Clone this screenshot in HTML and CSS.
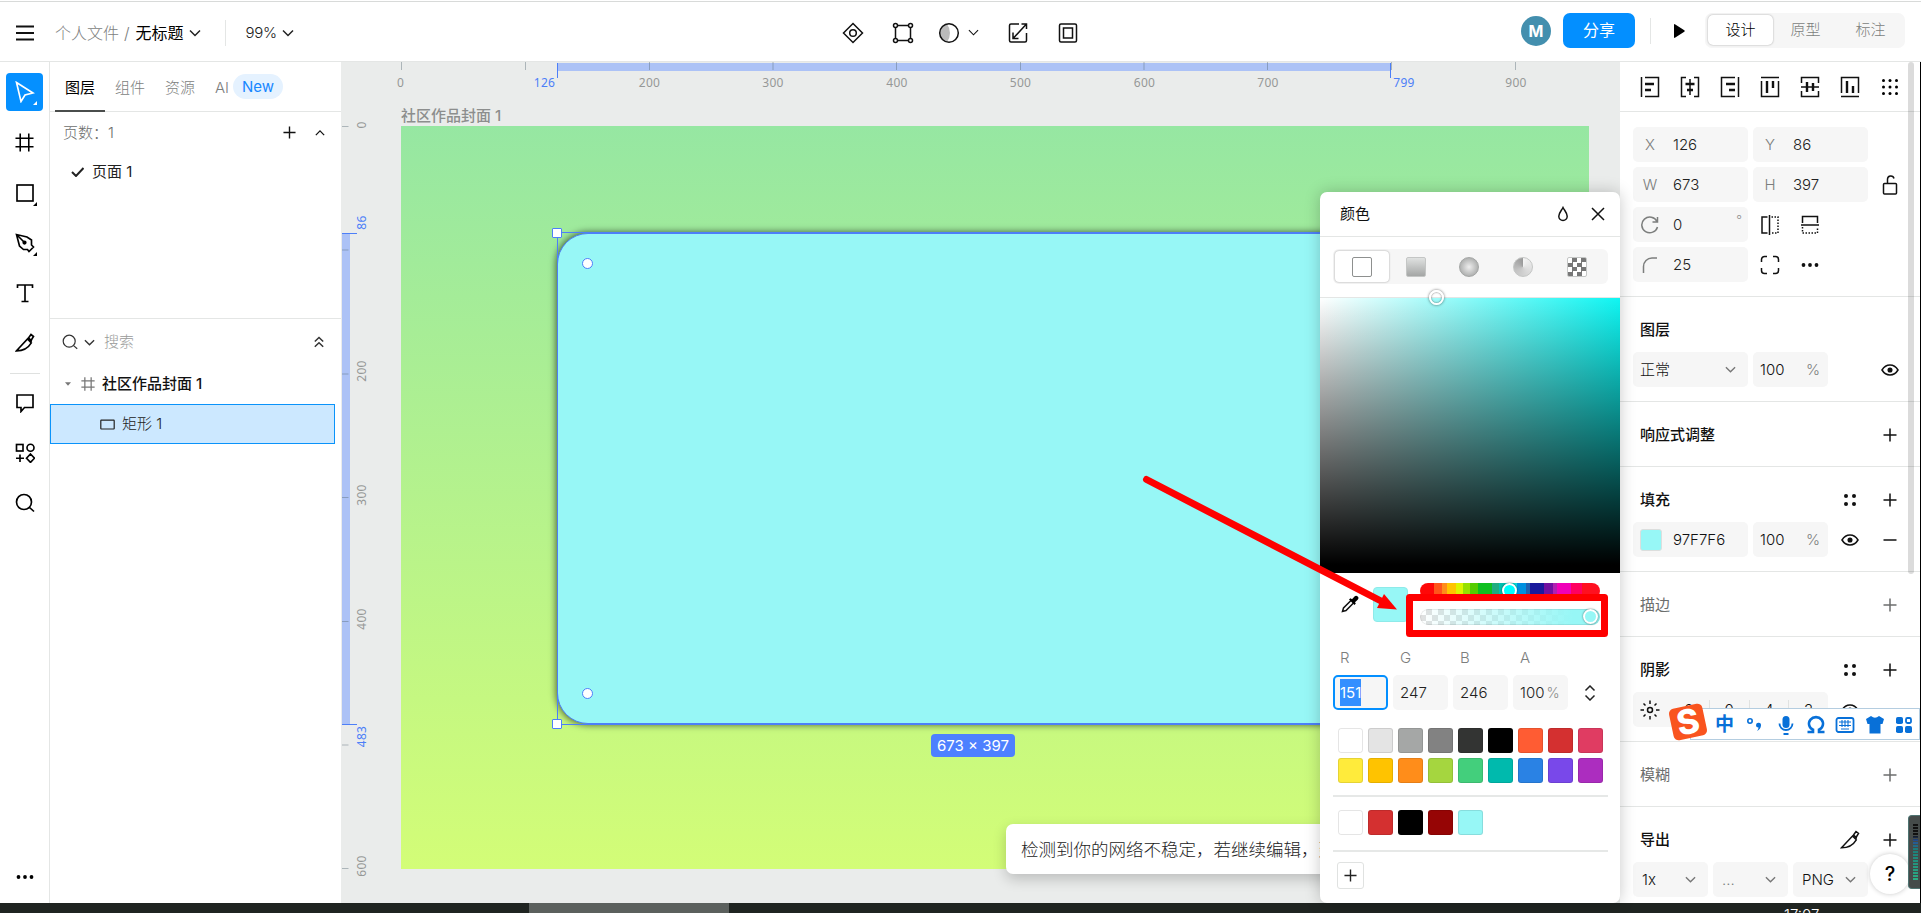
FILE: index.html
```html
<!DOCTYPE html>
<html lang="zh-CN">
<head>
    <meta charset="UTF-8">
    <meta name="viewport" content="width=device-width, initial-scale=1.0">
    <title>无标题</title>
    <link rel="stylesheet" href="styles.css">
</head>
<body>

<!-- Shared icons -->
<svg class="sprite">
    <symbol id="chevron" viewBox="0 0 12 12"><path d="M1 3.5l5 5 5-5"/></symbol>
    <symbol id="plus" viewBox="0 0 14 14"><path d="M7 .5v13M.5 7h13"/></symbol>
    <symbol id="minus" viewBox="0 0 14 14"><path d="M.5 7h13"/></symbol>
    <symbol id="eye" viewBox="0 0 18 12"><path d="M1 6c2-3.300 5-5 8-5s6 1.700 8 5c-2 3.300-5 5-8 5s-6-1.700-8-5z"/><circle cx="9" cy="6" r="1.800" fill="currentColor"/></symbol>
    <symbol id="dots4" viewBox="0 0 14 14"><g fill="currentColor" stroke="none"><circle cx="3" cy="3" r="2"/><circle cx="11" cy="3" r="2"/><circle cx="3" cy="11" r="2"/><circle cx="11" cy="11" r="2"/></g></symbol>
    <symbol id="dots3" viewBox="0 0 18 6"><g fill="currentColor" stroke="none"><circle cx="2.500" cy="3" r="1.900"/><circle cx="9" cy="3" r="1.900"/><circle cx="15.500" cy="3" r="1.900"/></g></symbol>
    <symbol id="knife" viewBox="0 0 20 20"><path d="M1.500 17.800L12.500 6l3.800 3.800c-3 5-8 8-14.800 8zM13.500 5l2.500-3.500 2.500 2-2.500 4M12.500 6l1-1 2.800 2.600-.5 2"/></symbol>
    <symbol id="search" viewBox="0 0 20 20"><circle cx="9" cy="9" r="7.500"/><path d="M14.500 14.500L19 18.500"/></symbol>
    <symbol id="frame" viewBox="0 0 20 20"><path d="M5.500 .5v19M14.500 .5v19M.5 5.500h19M.5 14.500h19"/></symbol>
</svg>

<header class="topbar">
    <div class="top-left">
        <svg class="icon menu" width="18" height="16" viewBox="0 0 18 16"><path d="M0 1.500h18M0 8h18M0 14.500h18"/></svg>
        <span class="folder">个人文件</span><span class="slash">/</span><span class="doc">无标题</span>
        <svg class="icon" width="12" height="12"><use href="#chevron"/></svg>
        <span class="vline"></span>
        <span class="zoom">99%</span>
        <svg class="icon" width="12" height="12"><use href="#chevron"/></svg>
    </div>

    <div class="top-tools">
        <svg class="icon t-diamond" width="22" height="22" viewBox="0 0 22 22"><path d="M11 1.500l9.500 9.500-9.500 9.500L1.500 11z"/><circle cx="11" cy="11" r="3.300"/></svg>
        <svg class="icon t-box" width="22" height="22" viewBox="0 0 22 22"><path d="M5 3.500h12M5 18.500h12M3.500 5v12M18.500 5v12"/><circle cx="3.500" cy="3.500" r="2"/><circle cx="18.500" cy="3.500" r="2"/><circle cx="3.500" cy="18.500" r="2"/><circle cx="18.500" cy="18.500" r="2"/></svg>
        <svg class="icon t-bool" width="22" height="22" viewBox="0 0 22 22"><path d="M9 2a9.300 9.300 0 0 0 0 18q3-4 3-9t-3-9z" fill="#bbb" stroke="none"/><circle cx="11" cy="11" r="9.300"/></svg>
        <svg class="icon t-chev" width="11" height="11"><use href="#chevron"/></svg>
        <svg class="icon t-export" width="20" height="22" viewBox="0 0 20 22"><path d="M11 2H3a1.500 1.500 0 0 0-1.500 1.500v15A1.500 1.500 0 0 0 3 20h14a1.500 1.500 0 0 0 1.500-1.500V11M13.500 2h5v5M18 2.500L5.500 16M5 10.500V16.500h5.500"/></svg>
        <svg class="icon" width="20" height="22" viewBox="0 0 20 22"><rect x="1.500" y="2" width="17" height="18" rx="1.500"/><rect x="5.500" y="6" width="9" height="10"/></svg>
    </div>

    <div class="top-right">
        <span class="avatar">M</span>
        <span class="share">分享</span>
        <span class="vline"></span>
        <svg class="play" width="13" height="16" viewBox="0 0 13 16"><path d="M1 2v12q0 1.500 1.300.6l9-5.800q1-.8 0-1.600l-9-5.800Q1 .5 1 2z"/></svg>
        <div class="modes"><span class="on">设计</span><span>原型</span><span>标注</span></div>
    </div>
</header>

<div class="workspace">
    <nav class="toolbar">
        <span class="tool active"><svg class="icon" width="20" height="22" viewBox="0 0 20 22"><path d="M1.500 1.500l16.500 10.500-8 2-4 6.500z"/></svg><i></i></span>
        <span class="tool"><svg class="icon" width="19" height="19"><use href="#frame"/></svg></span>
        <span class="tool"><svg class="icon" width="18" height="18" viewBox="0 0 18 18"><rect x="1" y="1" width="16" height="16"/></svg><i></i></span>
        <span class="tool"><svg class="icon" width="20" height="20" viewBox="0 0 20 20"><path d="M1.500 1.500L4.500 13l4 3.500h4l1.500 2 4.500-4.500-2-2V7L12 4zM1.500 1.500l7 7"/><circle cx="9.500" cy="9.500" r="1.300" fill="currentColor"/></svg><i></i></span>
        <span class="tool"><svg class="icon" width="18" height="20" viewBox="0 0 18 20"><path d="M1.500 5V2h15v3M9 2v16M5.500 18.500h7"/></svg></span>
        <span class="tool"><svg class="icon" width="20" height="20"><use href="#knife"/></svg></span>
        <hr>
        <span class="tool"><svg class="icon" width="20" height="20" viewBox="0 0 20 20"><path d="M2 2h16v12.500H9.500L6 18.500v-4H2z"/></svg></span>
        <span class="tool"><svg class="icon" width="20" height="20" viewBox="0 0 20 20"><rect x="1.500" y="1.500" width="6.500" height="6.500"/><circle cx="15.500" cy="4.700" r="3.500"/><path d="M5 11.500v7.500M1 15.200h8M15.500 11l4 4.200-4 4.200-4-4.200z"/></svg></span>
        <span class="tool"><svg class="icon" width="20" height="20"><use href="#search"/></svg></span>
        <svg class="more" width="18" height="6"><use href="#dots3"/></svg>
    </nav>

    <aside class="layers">
        <div class="tabs">
            <span class="on">图层</span><span>组件</span><span>资源</span><span class="ai">AI</span><b>New</b>
        </div>
        <div class="pages">
            <div class="pages-head">
                <span>页数：1</span>
                <svg class="icon" width="13" height="13"><use href="#plus"/></svg>
                <svg class="icon up" width="10" height="10"><use href="#chevron"/></svg>
            </div>
            <div class="page-row">
                <svg class="icon bold" width="13" height="10" viewBox="0 0 13 10"><path d="M1 5l4 4 7.500-8"/></svg>
                <span>页面 1</span>
            </div>
        </div>
        <div class="search-row">
            <svg class="icon glass" width="16" height="16"><use href="#search"/></svg>
            <svg class="icon" width="11" height="11"><use href="#chevron"/></svg>
            <span>搜索</span>
            <svg class="icon collapse" width="10" height="12" viewBox="0 0 10 12"><path d="M.8 5.500L5 1.500l4.200 4M.8 10.800L5 6.800l4.200 4"/></svg>
        </div>
        <div class="layer-frame">
            <svg width="6" height="4" viewBox="0 0 6 4"><path d="M0 .3h6L3 3.700z"/></svg>
            <svg class="icon" width="14" height="14"><use href="#frame"/></svg>
            <span>社区作品封面 1</span>
        </div>
        <div class="layer-item">
            <svg class="icon" width="15" height="11" viewBox="0 0 15 11"><rect x=".8" y="1.200" width="13.400" height="8.800" rx=".5"/></svg>
            <span>矩形 1</span>
        </div>
    </aside>

    <main class="canvas">
        <!-- Rulers -->
        <svg class="rulers" width="1279" height="841" viewBox="341 62 1279 841">
            <g class="range"><rect x="557" y="63" width="834" height="8"/><rect x="342" y="233" width="8" height="491"/></g>
            <path class="ticks" d="M401.500 62v8M525.500 62v8M649.500 62v8M773 62v8M896.500 62v8M1020.500 62v8M1144 62v8M1267.500 62v8M1391.500 62v8M1515.500 62v8M342 126.500h6.500M342 250h6.500M342 374h6.500M342 497.500h6.500M342 621.500h6.500M342 745h6.500M342 868.500h6.500"/>
            <path class="edge" d="M557.500 63v15M1390.500 63v15M342 233.500h15M342 724.500h15"/>
            <g class="num">
                <text x="400.500" y="87">0</text><text x="649.500" y="87">200</text><text x="773" y="87">300</text><text x="897" y="87">400</text><text x="1020.500" y="87">500</text><text x="1144.500" y="87">600</text><text x="1268" y="87">700</text><text x="1516" y="87">900</text>
                <text class="sel" x="544.500" y="87">126</text><text class="sel" x="1404" y="87">799</text>
                <text transform="translate(366 125) rotate(-90)">0</text>
                <text transform="translate(366 371) rotate(-90)">200</text>
                <text transform="translate(366 495) rotate(-90)">300</text>
                <text transform="translate(366 619) rotate(-90)">400</text>
                <text transform="translate(366 866) rotate(-90)">600</text>
                <text class="sel" transform="translate(366 222.500) rotate(-90)">86</text>
                <text class="sel" transform="translate(366 736.500) rotate(-90)">483</text>
            </g>
        </svg>
        <span class="board-name">社区作品封面 1</span>
        <div class="board"></div>
        <div class="shape"></div>
        <div class="selection"></div>
        <i class="handle h-tl"></i>
        <i class="handle h-bl"></i>
        <i class="radius r-tl"></i>
        <i class="radius r-bl"></i>
        <span class="size">673 × 397</span>
        <div class="toast">检测到你的网络不稳定，若继续编辑，建议</div>
    </main>

    <aside class="props">
        <div class="align">
            <svg class="icon" width="20" height="22" viewBox="0 0 20 22"><path d="M1.500 1v20M5 1.500h13.500v19H5"/><path class="fat" d="M5 8h9M5 14h6"/></svg>
            <svg class="icon" width="20" height="22" viewBox="0 0 20 22"><path d="M6 1.500H1.500v19H6M14 1.500h4.500v19H14M10 3v16"/><path class="fat" d="M5.500 8h9M7 14h6"/></svg>
            <svg class="icon" width="20" height="22" viewBox="0 0 20 22"><path d="M18.500 1v20M15 1.500H1.500v19H15"/><path class="fat" d="M6 8h9M9 14h6"/></svg>
            <svg class="icon" width="20" height="22" viewBox="0 0 20 22"><path d="M1 1.500h18M1.500 5v15.500h17V5"/><path class="fat" d="M7 5v12M13 5v7"/></svg>
            <svg class="icon" width="20" height="22" viewBox="0 0 20 22"><path d="M1.500 7V1.500h17V7M1.500 15v5.500h17V15M1 11h18"/><path class="fat" d="M7 6v10M13 7v8"/></svg>
            <svg class="icon" width="20" height="22" viewBox="0 0 20 22"><path d="M1 20.500h18M1.500 17V1.500h17V17"/><path class="fat" d="M7 5v12M13 10v7"/></svg>
            <svg width="18" height="18" viewBox="0 0 18 18"><g id="dotrow"><circle cx="2.500" cy="2.500" r="1.500"/><circle cx="9" cy="2.500" r="1.500"/><circle cx="15.500" cy="2.500" r="1.500"/></g><use href="#dotrow" y="6.500"/><use href="#dotrow" y="13"/></svg>
        </div>

        <div class="geometry">
            <span class="field"><em>X</em>126</span><span class="field"><em>Y</em>86</span><span></span>
            <span class="field"><em>W</em>673</span><span class="field"><em>H</em>397</span>
            <span class="cell"><svg class="icon" width="16" height="22" viewBox="0 0 16 22"><rect x="1.500" y="9.500" width="13" height="10.500" rx="1"/><path d="M5.500 9.500V5a3.300 3.300 0 0 1 6.500-.5"/></svg></span>
            <span class="field"><em><svg class="icon" width="18" height="18" viewBox="0 0 18 18"><path d="M16 5.500A8 7.800 0 1 0 16.500 11M16.500 1v5h-5"/></svg></em>0<sup>°</sup></span>
            <span class="cell pair">
                <svg class="icon" width="20" height="20" viewBox="0 0 20 20"><path d="M9.500 0v20M7.500 2H2v16h5.500"/><path stroke-dasharray="1.500 1.500" d="M11.500 2H18v16h-6.500"/></svg>
                <svg class="icon" width="20" height="20" viewBox="0 0 20 20"><path d="M1 10h18M2.500 8V1.500h15V8"/><path stroke-dasharray="1.500 1.500" d="M2.500 12v6h15v-6"/></svg>
            </span><span></span>
            <span class="field"><em><svg class="icon" width="16" height="18" viewBox="0 0 16 18"><path d="M1.500 17v-6.500A8.500 8.500 0 0 1 10 2h5"/></svg></em>25</span>
            <span class="cell pair">
                <svg class="icon" width="20" height="20" viewBox="0 0 20 20"><path d="M1.500 7V4.500a3 3 0 0 1 3-3H7M13 1.500h2.500a3 3 0 0 1 3 3V7M18.500 13v2.500a3 3 0 0 1-3 3H13M7 18.500H4.500a3 3 0 0 1-3-3V13"/></svg>
                <svg width="20" height="6"><use href="#dots3"/></svg>
            </span><span></span>
        </div>

        <section>
            <div class="title"><h3>图层</h3></div>
            <div class="row">
                <span class="field wide">正常<svg class="icon" width="11" height="11"><use href="#chevron"/></svg></span>
                <span class="field pct">100<em>%</em></span>
                <svg class="icon eye-last" width="18" height="12"><use href="#eye"/></svg>
            </div>
        </section>
        <section>
            <div class="title"><h3>响应式调整</h3><svg class="icon" width="14" height="14"><use href="#plus"/></svg></div>
        </section>
        <section>
            <div class="title"><h3>填充</h3><svg class="icon" width="14" height="14"><use href="#dots4"/></svg><svg class="icon" width="14" height="14"><use href="#plus"/></svg></div>
            <div class="row">
                <span class="field wide fill"><i></i>97F7F6</span>
                <span class="field pct">100<em>%</em></span>
                <svg class="icon near" width="18" height="12"><use href="#eye"/></svg>
                <svg class="icon last" width="14" height="14"><use href="#minus"/></svg>
            </div>
        </section>
        <section>
            <div class="title off"><h3>描边</h3><svg class="icon" width="14" height="14"><use href="#plus"/></svg></div>
        </section>
        <section>
            <div class="title"><h3>阴影</h3><svg class="icon" width="14" height="14"><use href="#dots4"/></svg><svg class="icon" width="14" height="14"><use href="#plus"/></svg></div>
            <div class="row">
                <span class="field shadow">
                    <svg class="icon" width="20" height="20" viewBox="0 0 20 20"><circle cx="10" cy="10" r="2.500"/><path d="M10 .5V4M10 16v3.500M.5 10H4M16 10h3.500M3.500 3.500l2 2M14.500 14.500l2 2M3.500 16.500l2-2M14.500 5.500l2-2"/></svg>
                    <b>0</b><b>0</b><b>4</b><b>2</b>
                </span>
                <svg class="icon near" width="18" height="12"><use href="#eye"/></svg>
            </div>
        </section>
        <section>
            <div class="title off"><h3>模糊</h3><svg class="icon" width="14" height="14"><use href="#plus"/></svg></div>
        </section>
        <section>
            <div class="title"><h3>导出</h3><svg class="icon cut" width="20" height="20"><use href="#knife"/></svg><svg class="icon" width="14" height="14"><use href="#plus"/></svg></div>
            <div class="row export">
                <span class="field">1x<svg class="icon" width="11" height="11"><use href="#chevron"/></svg></span>
                <span class="field"><em>...</em><svg class="icon" width="11" height="11"><use href="#chevron"/></svg></span>
                <span class="field">PNG<svg class="icon" width="11" height="11"><use href="#chevron"/></svg></span>
            </div>
        </section>
    </aside>
</div>

<footer class="taskbar"><span class="task"></span><span class="clock">17:07</span></footer>

<!-- Color picker popup -->
<div class="picker">
    <div class="picker-head">
        <span>颜色</span>
        <svg class="icon" width="12" height="16" viewBox="0 0 12 16"><path d="M6 1.500C4.500 4.500 1.800 7 1.800 10.300a4.200 4.200 0 0 0 8.400 0C10.200 7 7.500 4.500 6 1.500z"/></svg>
        <svg class="icon" width="14" height="14" viewBox="0 0 14 14"><path d="M1 1l12 12M13 1L1 13"/></svg>
    </div>
    <div class="kinds">
        <span class="on"><i class="solid"></i></span><span><i class="linear"></i></span><span><i class="radial"></i></span><span><i class="conic"></i></span><span><i class="image"></i></span>
    </div>
    <div class="spectrum"><i></i></div>
    <div class="sliders">
        <svg class="dropper" width="18" height="18" viewBox="0 0 18 18"><path d="M10 5.500L2.500 13l-1 3.500 3.500-1L12.500 8" fill="none" stroke="#111" stroke-width="1.500"/><path d="M8 4.500l1.500-1.300 1.500 1L13.500 1.500a2.200 2.200 0 0 1 3.200 3.200L14 7.200l.8 1.300L13.500 10z"/></svg>
        <span class="current"></span>
        <div class="bars">
            <div class="hue"><i></i></div>
            <div class="alpha"><i></i></div>
        </div>
    </div>
    <div class="rgba names"><span>R</span><span>G</span><span>B</span><span>A</span></div>
    <div class="rgba values">
        <span class="focus"><mark>151</mark></span><span>247</span><span>246</span><span>100<em>%</em></span>
        <svg class="icon" width="12" height="16" viewBox="0 0 12 16"><path d="M1.500 5.500L6 1l4.500 4.500M1.500 10.500L6 15l4.500-4.500"/></svg>
    </div>
    <div class="swatches palette">
        <i></i><i></i><i></i><i></i><i></i><i></i><i></i><i></i><i></i>
        <i></i><i></i><i></i><i></i><i></i><i></i><i></i><i></i><i></i>
    </div>
    <div class="swatches recent"><i></i><i></i><i></i><i></i><i></i></div>
    <div class="add"><span><svg class="icon" width="13" height="13"><use href="#plus"/></svg></span></div>
</div>

<!-- Red arrow and box pointing at the opacity slider -->
<svg class="note" width="480" height="180" viewBox="1130 465 480 180">
    <path d="M1146.500 479.500L1381 601" stroke="#fe0000" stroke-width="7" stroke-linecap="round"/>
    <path d="M1397 609.500l-20-1.500 7-14z" fill="#fe0000"/>
    <rect x="1409.500" y="597.500" width="195" height="36" fill="none" stroke="#fe0000" stroke-width="7" stroke-linejoin="round"/>
</svg>

<i class="scrollbar"></i>
<span class="help">?</span>
<div class="meter"><i></i></div>

<!-- Input method bar -->
<div class="ime">
    <span>中</span>
    <svg width="22" height="22" viewBox="0 0 22 22"><circle cx="6" cy="7" r="2.200" fill="none" stroke="#0870d8" stroke-width="1.600"/><path d="M12 11a2.500 2.500 0 1 1 5 .5q-.3 3.500-4 5.500 1.500-2 1.500-3.500a2.500 2.500 0 0 1-2.500-2.500z"/></svg>
    <svg width="20" height="22" viewBox="0 0 20 22"><rect x="6.500" y="2" width="7" height="12" rx="3.500"/><path d="M3.500 9.500a6.500 6.500 0 0 0 13 0M7.500 20h5" fill="none" stroke="#0870d8" stroke-width="1.800"/></svg>
    <svg width="20" height="20" viewBox="0 0 20 20"><path d="M1.500 17H7v-2.300A7 6.600 0 1 1 13 14.700V17h5.500" fill="none" stroke="#0870d8" stroke-width="2.600"/></svg>
    <svg width="20" height="18" viewBox="0 0 20 18"><rect x="1.500" y="2" width="17" height="14" rx="2" fill="none" stroke="#0870d8" stroke-width="1.800"/><path d="M4 6h12M4 9.500h12M6 13h8M7 4v7M10 4v7M13 4v7" stroke="#0870d8" stroke-width="1.100"/></svg>
    <svg width="20" height="20" viewBox="0 0 20 20"><path d="M1 4l5-3q4 3.500 8 0l5 3-1.500 5H15.500v9.500h-11V9H2.500z"/></svg>
    <svg width="18" height="18" viewBox="0 0 18 18"><rect x="1" y="1" width="7" height="7" rx="1.800"/><rect x="1" y="10" width="7" height="7" rx="1.800"/><rect x="10" y="10" width="7" height="7" rx="1.800"/><rect x="11" y="2" width="5" height="5" rx="1.500" fill="none" stroke="#0870d8" stroke-width="1.800"/></svg>
</div>
<span class="sogou">S</span>

</body>
</html>
```

FILE: styles.css
```css
* {
    box-sizing: border-box;
}

body {
    margin: 0;
    width: 1921px;
    height: 913px;
    overflow: hidden;
    position: relative;
    display: flex;
    flex-direction: column;
    background: white;
    color: #222;
    font-family: Inter, "Noto Sans CJK SC", sans-serif;
    font-size: 15px;
    font-weight: 300;
    line-height: 20px;
}

i, em {
    font-style: normal;
}

svg {
    flex: none;
    display: block;
}

.sprite {
    position: absolute;
    width: 0;
    height: 0;
}

.icon {
    fill: none;
    stroke: currentColor;
    stroke-width: 1.5;
}

.icon.bold {
    stroke-width: 2;
}

/* Top bar */
.topbar {
    height: 62px;
    display: grid;
    grid-template-columns: 842px 1fr auto;
    border-top: 1px solid #fff;
    border-bottom: 1px solid #e4e6e5;
    box-shadow: inset 0 1px #d8dad9;
}

.top-left {
    display: flex;
    align-items: center;
    padding: 3px 0 0 16px;
    font-size: 16px;
}

.menu {
    margin-right: 21px;
    stroke-width: 1.800;
    color: #111;
}

.folder, .slash {
    color: #7c7e7d;
}

.slash {
    margin: 0 6px 0 5px;
}

.doc {
    color: #000;
    font-weight: 400;
    margin-right: 5px;
}

.vline {
    width: 1px;
    height: 26px;
    background: #e4e6e5;
}

.top-left .vline {
    margin: 0 20px 0 24px;
}

.zoom {
    font-size: 15px;
    margin-right: 5px;
    letter-spacing: -.3px;
}

.top-tools {
    display: flex;
    align-items: center;
    padding-top: 3px;
    color: #111;
}

.t-diamond {
    margin-right: 28px;
}

.t-box {
    margin-right: 24px;
}

.t-bool {
    margin-right: 8px;
}

.t-chev {
    margin-right: 29px;
    stroke-width: 1.200;
}

.t-export {
    margin-right: 30px;
}

.top-right {
    display: flex;
    align-items: center;
    padding: 0 16px 1px 0;
}

.avatar {
    width: 30px;
    height: 30px;
    border-radius: 50%;
    background: #438fae;
    color: white;
    font-weight: 700;
    font-size: 16px;
    line-height: 30px;
    text-align: center;
    margin-right: 12px;
}

.share {
    width: 72px;
    height: 35px;
    border-radius: 7px;
    background: #038fff;
    color: white;
    font-size: 16px;
    font-weight: 400;
    line-height: 34px;
    text-align: center;
    margin-right: 15px;
}

.play {
    margin: 0 19px 0 22px;
}

.modes {
    display: flex;
    width: 200px;
    height: 35px;
    padding: 2px 2px 3px 3px;
    border-radius: 7px;
    background: #f6f6f6;
}

.modes span {
    width: 65px;
    line-height: 30px;
    text-align: center;
    color: #7c7e7d;
}

.modes .on {
    background: white;
    color: #000;
    border-radius: 5px;
    box-shadow: 0 0 2px rgba(0, 0, 0, .35);
    height: 30px;
}

/* Columns */
.workspace {
    display: flex;
    height: 841px;
}

.toolbar {
    width: 50px;
    border-right: 1px solid #e4e6e5;
    display: flex;
    flex-direction: column;
    align-items: center;
    padding-top: 5px;
    color: #000;
}

.tool {
    width: 37px;
    height: 38px;
    margin: 6px 0 6.300px;
    display: flex;
    align-items: center;
    justify-content: center;
    position: relative;
    border-radius: 4px;
}

.tool .icon {
    stroke-width: 1.650;
}

.tool.active {
    background: #0590ff;
    color: white;
}

.tool i {
    position: absolute;
    right: 6px;
    bottom: 6px;
    border: 2.500px solid currentColor;
    border-top-color: transparent;
    border-left-color: transparent;
}

.toolbar hr {
    width: 30px;
    height: 1px;
    border: 0;
    margin: 4px 0;
    background: #dfe1e0;
}

.more {
    margin: auto 0 23px;
}

.layers {
    width: 291px;
    background: white;
}

.tabs {
    display: flex;
    align-items: center;
    height: 50px;
    padding-left: 5px;
    border-bottom: 1px solid #e4e6e5;
    color: #7c7e7d;
}

.tabs span {
    width: 50px;
    height: 50px;
    line-height: 51px;
    text-align: center;
}

.tabs .on {
    color: #000;
    font-weight: 400;
    border-bottom: 2px solid #4a4d4c;
}

.tabs .ai {
    width: auto;
    margin: 0 4px 0 10px;
}

.tabs b {
    padding: 0 9px;
    border-radius: 13px;
    background: #e5f2ff;
    color: #1787ff;
    font-weight: 400;
    line-height: 25px;
}

.pages {
    height: 207px;
    border-bottom: 1px solid #e4e6e5;
}

.pages-head {
    display: flex;
    align-items: center;
    height: 41px;
    padding: 0 16px 0 13px;
    color: #6c6e6d;
}

.pages-head .icon {
    margin-left: auto;
    color: #111;
}

.pages-head .icon.up {
    margin-left: 19px;
    transform: rotate(180deg);
}

.page-row {
    display: flex;
    align-items: center;
    height: 38px;
    padding-left: 21px;
    gap: 8px;
    font-weight: 400;
}

.search-row {
    display: flex;
    align-items: center;
    height: 46px;
    padding: 0 17px 0 12px;
    color: #333;
}

.glass {
    margin-right: 6px;
}

.search-row span {
    margin-left: 9px;
    color: #989a99;
}

.collapse {
    margin-left: auto;
}

.layer-frame {
    display: flex;
    align-items: center;
    height: 39px;
    padding: 0 0 1px 15px;
    color: #111;
    font-weight: 500;
}

.layer-frame svg {
    fill: #777;
    margin-right: 10px;
}

.layer-frame .icon {
    fill: none;
    color: #777;
    margin-right: 7px;
    stroke-width: 1.800;
}

.layer-item {
    display: flex;
    align-items: center;
    gap: 7px;
    width: 285px;
    height: 40px;
    padding-left: 49px;
    border: 1px solid #0a93fa;
    background: #cce8ff;
}

.layer-item .icon {
    stroke-width: 1.200;
}

/* Canvas */
.canvas {
    width: 1279px;
    position: relative;
    overflow: hidden;
    background: #eaeceb;
}

.canvas > * {
    position: absolute;
}

.rulers {
    left: 0;
    top: 0;
    font-family: "Noto Sans", sans-serif;
    font-size: 12px;
}

.range {
    fill: #acc2f6;
}

.ticks {
    stroke: rgba(80, 100, 110, .4);
}

.edge {
    stroke: #4d7ff8;
}

.num {
    fill: #969897;
    text-anchor: middle;
    font-weight: 400;
    letter-spacing: .3px;
}

.num .sel {
    fill: #4d7ff8;
}

.board-name {
    left: 60px;
    top: 44px;
    color: #8c8e8d;
    font-weight: 500;
}

.board {
    left: 60px;
    top: 64px;
    width: 1188px;
    height: 743px;
    background: linear-gradient(#96e7a2, #d3fd77);
}

.shape {
    left: 216px;
    top: 171px;
    width: 834px;
    height: 491px;
    border-radius: 31px;
    border: 1px solid #4d7ff8;
    background: #97f7f6;
    box-shadow: 0 0 7px 1px rgba(0, 0, 0, .6);
}

.selection {
    left: 216px;
    top: 170px;
    width: 834px;
    height: 493px;
    border: 1px solid #4d7ff8;
}

.handle {
    left: 211px;
    width: 10px;
    height: 10px;
    background: white;
    border: 1px solid #4d7ff8;
    border-radius: 1px;
}

.h-tl {
    top: 166px;
}

.h-bl {
    top: 657px;
}

.radius {
    left: 241px;
    width: 11px;
    height: 11px;
    background: white;
    border: 1px solid #4d7ff8;
    border-radius: 50%;
}

.r-tl {
    top: 196px;
}

.r-bl {
    top: 626px;
}

.size {
    left: 590px;
    top: 672px;
    width: 84px;
    height: 23px;
    border-radius: 4px;
    background: #4d80ff;
    color: white;
    font-weight: 400;
    line-height: 23px;
    text-align: center;
    white-space: nowrap;
}

.toast {
    left: 665px;
    top: 762px;
    width: 420px;
    height: 50px;
    padding-left: 15px;
    border-radius: 7px;
    background: white;
    box-shadow: 0 5px 14px rgba(0, 0, 0, .2);
    font-size: 17.500px;
    line-height: 51px;
    white-space: nowrap;
}

/* Right panel */
.props {
    width: 301px;
    border-right: 1px solid #000;
}

.align {
    display: flex;
    align-items: center;
    gap: 20px;
    height: 50px;
    padding-left: 20px;
    border-bottom: 1px solid #e4e6e5;
    color: #111;
}

.align svg:last-child {
    margin-left: 1px;
}

.align .fat {
    stroke-width: 2.400;
}

.geometry {
    display: grid;
    grid-template-columns: 115px 115px 34px;
    grid-auto-rows: 35px;
    gap: 5px;
    height: 184px;
    padding: 15px 0 0 13px;
    color: #222;
}

.field {
    display: flex;
    align-items: center;
    height: 35px;
    padding: 0 9px 0 7px;
    border-radius: 5px;
    background: #f6f6f6;
    position: relative;
}

.field em {
    color: #7c7e7d;
}

.geometry em {
    width: 20px;
    margin-right: 13px;
    display: flex;
    justify-content: center;
}

.field sup {
    margin: 0 -3px 8px auto;
    color: #8a8c8b;
    line-height: 15px;
}

.cell {
    display: flex;
    align-items: center;
    justify-content: center;
    color: #111;
}

.pair {
    justify-content: flex-start;
    padding-left: 7px;
    gap: 20px;
}

.props section {
    border-top: 1px solid #e4e6e5;
    padding: 15px 23px 14px 13px;
}

.title {
    display: flex;
    align-items: center;
    height: 35px;
    gap: 26px;
    padding-left: 7px;
    color: #111;
}

.title h3 {
    flex: 1;
    margin: 0;
    font-size: 15px;
    font-weight: 500;
}

.title.off {
    color: #6c6e6d;
}

.title.off h3 {
    font-weight: 400;
}

.title .cut {
    margin-right: -3px;
}

.row {
    display: flex;
    align-items: center;
    gap: 5px;
    margin-top: 5px;
    color: #111;
}

.wide {
    width: 115px;
    padding-right: 12px;
}

.wide .icon, .export .icon {
    margin-left: auto;
    color: #777;
}

.pct {
    width: 75px;
    padding-right: 8px;
    justify-content: space-between;
}

.fill i {
    width: 22px;
    height: 22px;
    margin-right: 11px;
    border: 1px solid #dcdedd;
    border-radius: 3px;
    background: #97f7f6;
}

.last {
    margin-left: auto;
}

.eye-last {
    margin: 0 -2px 0 auto;
}

.near {
    margin-left: 8px;
}

.shadow {
    width: 195px;
    padding: 0 0 0 7px;
}

.shadow .icon {
    margin-right: 9px;
}

.shadow b {
    width: 40px;
    text-align: center;
    font-weight: 300;
    border-left: 1px solid #e0e2e1;
}

.shadow .icon + b {
    border: 0;
}

.export .field {
    width: 75px;
    padding: 0 12px 0 9px;
}

/* Color picker */
.picker {
    position: absolute;
    left: 1320px;
    top: 192px;
    width: 300px;
    height: 711px;
    border-radius: 7px;
    background: white;
    box-shadow: 0 0 16px rgba(0, 0, 0, .22);
}

.picker-head {
    display: flex;
    align-items: center;
    height: 45px;
    padding: 0 15px 0 20px;
    border-bottom: 1px solid #e4e6e5;
    color: #111;
    font-weight: 400;
}

.picker-head span {
    flex: 1;
}

.picker-head svg {
    margin-left: 22px;
}

.kinds {
    display: flex;
    justify-content: space-between;
    height: 35px;
    margin: 12px 12px 13px 13px;
    padding: 2px 4px 2px 2px;
    border-radius: 6px;
    background: #f6f6f6;
}

.kinds span {
    width: 54px;
    display: flex;
    align-items: center;
    justify-content: center;
    border-radius: 4px;
}

.kinds .on {
    background: white;
    box-shadow: 0 0 2px rgba(0, 0, 0, .4);
}

.kinds i {
    width: 20px;
    height: 20px;
    border: 1px solid #c4c6c5;
    border-radius: 2px;
}

.kinds .solid {
    border-color: #8e908f;
}

.kinds .linear {
    background: linear-gradient(#e0e2e1, #a4a6a5);
}

.kinds .radial {
    border-radius: 50%;
    border-color: #a4a6a5;
    background: radial-gradient(#eee, #979998);
}

.kinds .conic {
    border-radius: 50%;
    background: conic-gradient(#f4f4f4, #dcdcdc, #c4c4c4, #999);
}

.kinds .image {
    background: conic-gradient(#777 25%, white 0 50%, #777 0 75%, white 0) 0 0 / 9px 9px;
}

.spectrum {
    position: relative;
    height: 276px;
    border-top: 1px solid #e4e6e5;
    background: linear-gradient(transparent, #000 97%), linear-gradient(90deg, #fff, #0ff5f2);
}

.spectrum i {
    position: absolute;
    left: 109px;
    top: -8px;
    width: 15px;
    height: 15px;
    border: 2px solid white;
    border-radius: 50%;
    box-shadow: 0 0 3px rgba(0, 0, 0, .6), inset 0 0 2px rgba(0, 0, 0, .6);
}

.sliders {
    display: flex;
    align-items: flex-start;
    height: 71px;
    padding: 10px 0 0 21px;
}

.dropper {
    margin: 12px 14px 0 0;
}

.current {
    width: 35px;
    height: 35px;
    margin: 4px 12px 0 0;
    border-radius: 4px;
    background: #97f7f6;
    border: 1px solid #8eeae9;
}

.bars {
    width: 180px;
}

.hue {
    position: relative;
    height: 16px;
    border-radius: 8px;
    background: linear-gradient(90deg, #fe0808 8%, #ff551a 0 12%, #ff8c1a 0 15%, #ffc400 0 20%, #dcf500 0 24%, #96e000 0 28%, #55cc00 0 32%, #10bf20 0 40%, #20ac80 0 44%, #00c0b0 0 47%, #08ddd8 0 54%, #0090e0 0 59%, #2060b0 0 61%, #1a1a9c 0 69%, #7010a0 0 74%, #b020b0 0 76%, #f000b8 0 84%, #ff0060 0 90%, #ff1020 0);
}

.hue i, .alpha i {
    position: absolute;
    width: 15px;
    height: 15px;
    border: 2px solid white;
    border-radius: 50%;
    box-shadow: 0 0 2px rgba(0, 0, 0, .6);
}

.hue i {
    left: 82px;
    top: 0;
    background: #0ff;
}

.alpha {
    position: relative;
    height: 16px;
    margin-top: 10px;
    border-radius: 8px;
    background: linear-gradient(90deg, transparent, #97f7f6 85%), conic-gradient(#e0e0e0 25%, white 0 50%, #e0e0e0 0 75%, white 0) 0 0 / 12px 12px;
    box-shadow: inset 0 0 0 1px rgba(0, 0, 0, .08);
}

.alpha i {
    right: 2px;
    top: 0;
    background: #97f7f6;
}

.rgba {
    display: flex;
    gap: 5px;
    padding-left: 13px;
}

.rgba span {
    width: 55px;
    padding-left: 7px;
}

.names {
    padding-top: 4px;
    color: #7c7e7d;
}

.values {
    align-items: center;
    margin-top: 7px;
}

.values span {
    height: 35px;
    line-height: 35px;
    border-radius: 5px;
    background: #f6f6f6;
    white-space: nowrap;
}

.values .focus {
    border: 2px solid #038fff;
    padding-left: 5px;
    line-height: 31px;
}

.values mark {
    display: inline-block;
    height: 27px;
    line-height: 27px;
    background: #338fff;
    color: white;
    font-weight: 400;
}

.values em {
    margin-left: 2px;
    font-size: 14px;
    color: #8a8c8b;
}

.values .icon {
    margin-left: 11px;
}

.swatches {
    display: grid;
    grid-template-columns: repeat(9, 25px);
    gap: 5px;
    margin: 0 12px 0 13px;
    padding: 18px 0 12px 5px;
    border-bottom: 2px solid #e6e8e7;
}

.swatches i {
    height: 25px;
    border-radius: 3px;
    border: 1px solid rgba(0, 0, 0, .1);
}

.recent {
    padding: 13px 0 15px 5px;
}

.palette i:nth-child(2) { background: #e4e4e4; }
.palette i:nth-child(3) { background: #a5a7a6; }
.palette i:nth-child(4) { background: #828282; }
.palette i:nth-child(5) { background: #333433; }
.palette i:nth-child(6) { background: #000; }
.palette i:nth-child(7) { background: #ff5c33; }
.palette i:nth-child(8) { background: #d43030; }
.palette i:nth-child(9) { background: #e03c62; }
.palette i:nth-child(10) { background: #ffeb3b; }
.palette i:nth-child(11) { background: #ffc300; }
.palette i:nth-child(12) { background: #ff8d1a; }
.palette i:nth-child(13) { background: #a5d63f; }
.palette i:nth-child(14) { background: #43cf7c; }
.palette i:nth-child(15) { background: #00baad; }
.palette i:nth-child(16) { background: #2a82e4; }
.palette i:nth-child(17) { background: #7948ea; }
.palette i:nth-child(18) { background: #ac2dbf; }

.recent i:nth-child(2) { background: #d43030; }
.recent i:nth-child(3) { background: #000; }
.recent i:nth-child(4) { background: #960505; }
.recent i:nth-child(5) { background: #97f7f6; }

.add {
    padding: 10px 0 0 17px;
}

.add span {
    width: 27px;
    height: 27px;
    display: flex;
    align-items: center;
    justify-content: center;
    border: 1px solid #e0e2e1;
    border-radius: 3px;
}

.note {
    position: absolute;
    left: 1130px;
    top: 465px;
}

.scrollbar {
    position: absolute;
    left: 1908px;
    top: 62px;
    width: 6px;
    height: 512px;
    border-radius: 3px;
    background: rgba(0, 0, 0, .14);
}

.help {
    position: absolute;
    left: 1870px;
    top: 854px;
    width: 40px;
    height: 40px;
    border-radius: 50%;
    background: white;
    box-shadow: 0 0 5px rgba(0, 0, 0, .22);
    color: #000;
    font-size: 20px;
    font-weight: 500;
    line-height: 40px;
    text-align: center;
}

/* Volume meter peeking in at the right edge */
.meter {
    position: absolute;
    left: 1908px;
    top: 815px;
    width: 12px;
    height: 74px;
    padding: 8px 0 8px 4px;
    border: 1px solid #4f7472;
    border-right: 0;
    border-radius: 4px 0 0 4px;
    background: #454b4a;
}

.meter i {
    display: block;
    width: 5px;
    height: 57px;
    background: repeating-linear-gradient(transparent 0 2px, #454b4a 2px 3px), linear-gradient(#111 20%, #28539a 30%, #1c7f7a 45%, #2cb084);
}

/* Input method bar */
.ime {
    position: absolute;
    left: 1690px;
    top: 708px;
    width: 230px;
    height: 32px;
    padding: 2px 6px 0 24px;
    display: flex;
    align-items: center;
    justify-content: space-between;
    background: white;
    border: 1px solid #b4cde0;
    fill: #0870d8;
}

.ime span {
    color: #0870d8;
    font-size: 19px;
    font-weight: 700;
}

.sogou {
    position: absolute;
    left: 1671px;
    top: 706px;
    width: 34px;
    height: 32px;
    border-radius: 5px;
    background: #f9541f;
    color: white;
    font-size: 34px;
    font-weight: 800;
    line-height: 32px;
    text-align: center;
    transform: rotate(-12deg);
}

.taskbar {
    height: 10px;
    display: flex;
    overflow: hidden;
    padding-left: 529px;
    background: #1f2421;
}

.task {
    width: 200px;
    background: #5b605d;
}

.clock {
    margin: 2px 0 0 1055px;
    color: white;
    font-size: 15px;
}
```
